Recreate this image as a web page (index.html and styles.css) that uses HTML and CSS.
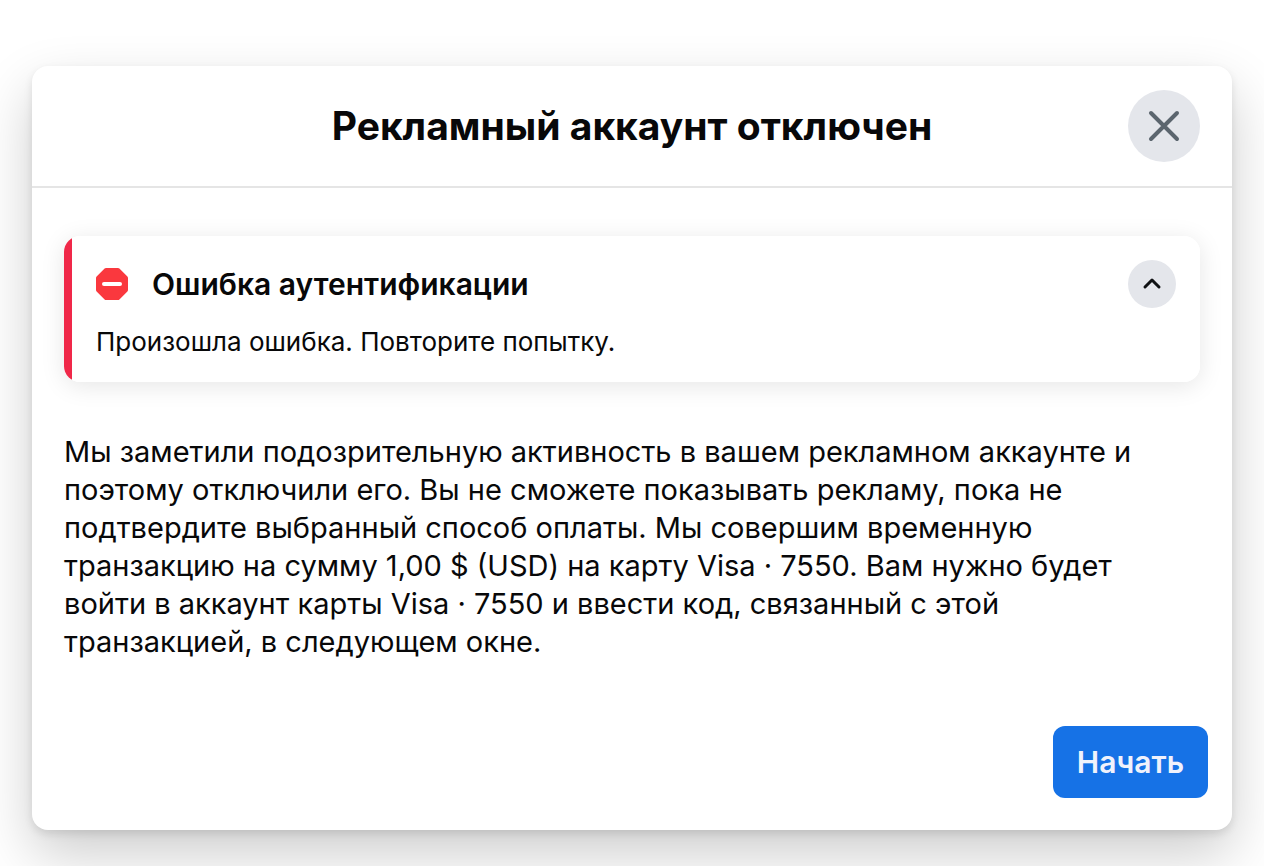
FILE: index.html
```html
<!DOCTYPE html>
<html lang="ru">
<head>
<meta charset="utf-8">
<meta name="viewport" content="width=device-width, initial-scale=1">
<title>Рекламный аккаунт отключен</title>
<link rel="stylesheet" href="styles.css">
</head>
<body>
<main class="dialog" role="dialog" aria-labelledby="dialog-title">
  <header class="dialog-header">
    <h1 class="dialog-title" id="dialog-title">Рекламный аккаунт отключен</h1>
    <button class="close-button" type="button" aria-label="Закрыть">
      <svg width="36" height="36" viewBox="0 0 36 36" aria-hidden="true"><path d="M5 5 31 31M31 5 5 31" fill="none" stroke="#5b656e" stroke-width="4" stroke-linecap="round"/></svg>
    </button>
  </header>
  <div class="dialog-body">
    <section class="notice">
      <div class="notice-heading">
        <svg class="notice-icon" width="32" height="32" viewBox="0 0 32 32" aria-hidden="true"><path d="M10 0h12a2 2 0 0 1 1.400.6l8 8A2 2 0 0 1 32 10v12a2 2 0 0 1-.6 1.400l-8 8A2 2 0 0 1 22 32H10a2 2 0 0 1-1.400-.6l-8-8A2 2 0 0 1 0 22V10a2 2 0 0 1 .6-1.400l8-8A2 2 0 0 1 10 0z" fill="#fa383e"/><rect x="6" y="14" width="20" height="4" rx="2" fill="#fff"/></svg>
        <h2 class="notice-title">Ошибка аутентификации</h2>
        <button class="collapse-button" type="button" aria-label="Свернуть">
          <svg width="24" height="24" viewBox="0 0 24 24" aria-hidden="true"><path d="m5 15 7-7 7 7" fill="none" stroke="#101214" stroke-width="3" stroke-linecap="round" stroke-linejoin="round"/></svg>
        </button>
      </div>
      <p class="notice-text">Произошла ошибка. Повторите попытку.</p>
    </section>
    <p class="message">Мы заметили подозрительную активность в вашем рекламном аккаунте и поэтому отключили его. Вы не сможете показывать рекламу, пока не подтвердите выбранный способ оплаты. Мы совершим временную транзакцию на сумму 1,00 $ (USD) на карту Visa · 7550. Вам нужно будет войти в аккаунт карты Visa · 7550 и ввести код, связанный с этой транзакцией, в следующем окне.</p>
  </div>
  <footer class="dialog-footer">
    <button class="start-button" type="button">Начать</button>
  </footer>
</main>
</body>
</html>
```
FILE: styles.css
```css
* {
  box-sizing: border-box;
}

body {
  margin: 0;
  padding: 66px 32px 36px;
  background: #fff;
  color: #080809;
  font-family: Inter, "Liberation Sans", sans-serif;
}

h1,
h2,
p {
  margin: 0;
}

button {
  border: 0;
  padding: 0;
  font: inherit;
  cursor: pointer;
}

.dialog {
  border-radius: 16px;
  background: #fff;
  box-shadow: 0 24px 56px rgba(0, 0, 0, 0.2), 0 4px 8px rgba(0, 0, 0, 0.1);
}

.dialog-header {
  display: grid;
  grid-template-columns: 72px 1fr 72px;
  align-items: center;
  padding: 24px 32px;
  border-bottom: 2px solid #e5e5e5;
}

.dialog-title {
  grid-column: 2;
  font-size: 39px;
  line-height: 48px;
  font-weight: 700;
  text-align: center;
}

.close-button,
.collapse-button {
  display: flex;
  align-items: center;
  justify-content: center;
  border-radius: 50%;
  background: #e4e6eb;
}

.close-button {
  width: 72px;
  height: 72px;
}

.dialog-body {
  padding: 48px 32px 0;
}

.notice {
  padding: 24px 24px 22px 32px;
  border-radius: 16px;
  background: linear-gradient(to right, #f02849 8px, #fff 8px);
  box-shadow: 0 4px 24px rgba(0, 0, 0, 0.1);
}

.notice-heading {
  display: flex;
  align-items: center;
  gap: 24px;
}

.notice-title {
  flex: 1;
  font-size: 30px;
  line-height: 40px;
  font-weight: 600;
}

.collapse-button {
  width: 48px;
  height: 48px;
}

.notice-text {
  margin-top: 16px;
  font-size: 26px;
  line-height: 36px;
}

.message {
  margin-top: 51px;
  padding-right: 16px;
  font-size: 29px;
  line-height: 38px;
}

.dialog-footer {
  display: flex;
  justify-content: flex-end;
  padding: 65px 24px 32px;
}

.start-button {
  height: 72px;
  padding: 0 24px;
  border-radius: 12px;
  background: #1672e6;
  color: #f0f2fc;
  font-size: 30px;
  font-weight: 600;
}
```
